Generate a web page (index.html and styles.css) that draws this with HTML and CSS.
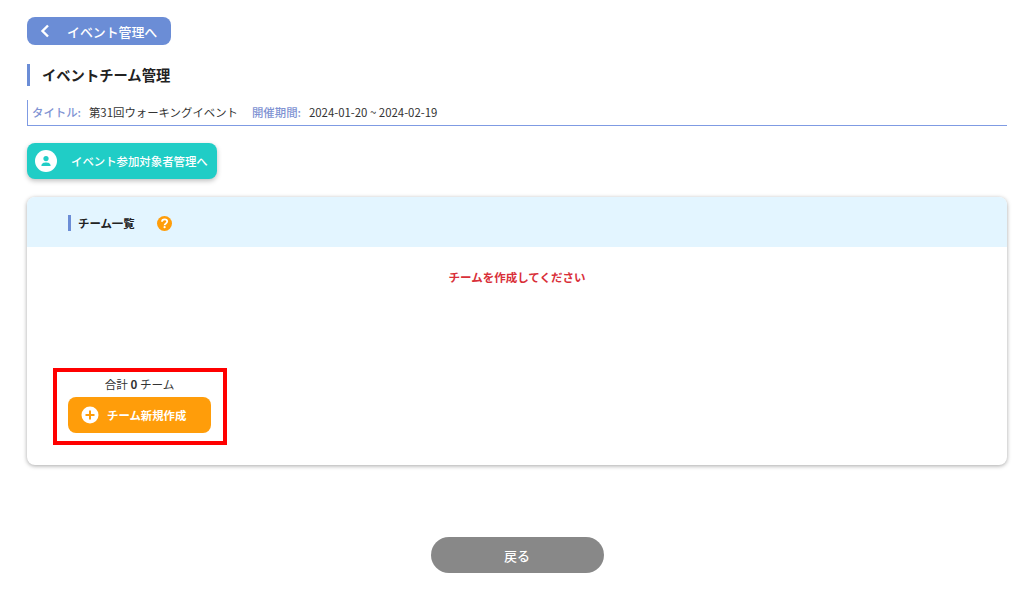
FILE: index.html
```html
<!DOCTYPE html>
<html lang="ja">
<head>
<meta charset="utf-8">
<title>イベントチーム管理</title>
<link rel="stylesheet" href="styles.css">
</head>
<body>
<main class="page">
  <a class="back-link">
    <svg class="back-icon" viewBox="0 0 10 14"><path d="M8 1.5 L2.5 7 L8 12.5" fill="none" stroke="#fff" stroke-width="2.4"/></svg>
    <span>イベント管理へ</span>
  </a>
  <h1 class="title">イベントチーム管理</h1>
  <div class="info">
    <span class="info-label">タイトル:</span><span class="info-value first">第31回ウォーキングイベント</span>
    <span class="info-label">開催期間:</span><span class="info-value">2024-01-20 ~ 2024-02-19</span>
  </div>
  <a class="member-link">
    <svg class="member-icon" viewBox="0 0 22 22"><circle cx="11" cy="11" r="11" fill="#fff"/><circle cx="11" cy="8.6" r="2.6" fill="#20cdc6"/><path d="M6.4 16 C6.4 13 8.6 12.4 11 12.4 C13.4 12.4 15.6 13 15.6 16 Z" fill="#20cdc6"/></svg>
    <span>イベント参加対象者管理へ</span>
  </a>
  <section class="card">
    <header class="card-head">
      <h2 class="card-title">チーム一覧</h2>
      <svg class="help-icon" viewBox="0 0 15 15"><circle cx="7.5" cy="7.5" r="7.5" fill="#ff9d0a"/><path d="M5 5.8 C5 4.2 6.2 3.4 7.6 3.4 C9 3.4 10.2 4.2 10.2 5.6 C10.2 7.4 7.6 7.4 7.6 9.2" fill="none" stroke="#fff" stroke-width="1.8"/><circle cx="7.6" cy="11.2" r="1.1" fill="#fff"/></svg>
    </header>
    <p class="notice">チームを作成してください</p>
    <div class="summary">
      <p class="total">合計 <b>0</b> チーム</p>
      <a class="create-btn">
        <svg class="plus-icon" viewBox="0 0 18 18"><circle cx="9" cy="9" r="8.5" fill="#fff"/><path d="M9 4.5 V13.5 M4.5 9 H13.5" stroke="#ff9d0a" stroke-width="2"/></svg>
        <span>チーム新規作成</span>
      </a>
    </div>
  </section>
  <div class="footer"><a class="return-btn">戻る</a></div>
</main>
</body>
</html>
```
FILE: styles.css
```css
* { box-sizing: border-box; }
html, body { margin: 0; height: 100%; overflow: hidden; background: #fff; }
body { font-family: "Noto Sans CJK JP", "Noto Sans", sans-serif; color: #222; }
p, h1, h2 { margin: 0; }
.page { padding: 17px 17px 0 27px; }
.back-link {
  display: flex; align-items: center; width: 144px; height: 28px;
  padding-left: 13px; background: #6b8dd6; border-radius: 8px;
  color: #fff; font-size: 12.9px; font-weight: 500;
}
.back-icon { width: 10px; height: 14px; margin-right: 17px; }
.title {
  margin-top: 19px; height: 22px; padding-left: 12px;
  border-left: 3px solid #6b8dd6;
  font-size: 14.3px; font-weight: 700; line-height: 22px;
}
.info {
  display: flex; align-items: center; height: 26px; margin-top: 14px;
  padding: 0 0 2px 4px; border-left: 1px solid #7f9be3; border-bottom: 1px solid #7f9be3;
  font-size: 11.4px;
}
.info-label { color: #7f93d3; font-weight: 500; margin-right: 8px; }
.info-value { color: #333; }
.info-value.first { margin-right: 14px; }
.member-link {
  display: flex; align-items: center; width: 190px; height: 36px; margin-top: 17px;
  padding-left: 8px; background: #20cdc6; border-radius: 8px;
  box-shadow: 0 2px 5px rgba(0,0,0,.25);
  color: #fff; font-size: 11.4px; font-weight: 500;
}
.member-icon { width: 22px; height: 22px; margin-right: 14px; }
.card {
  height: 268px; margin-top: 18px; background: #fff; border-radius: 8px;
  box-shadow: 0 1px 4px rgba(0,0,0,.35); overflow: hidden;
}
.card-head {
  display: flex; align-items: center; height: 50px; padding: 2px 0 0 41px;
  background: #e3f5ff;
}
.card-title {
  height: 16px; padding-left: 7px; border-left: 3px solid #6b8dd6;
  font-size: 11.4px; font-weight: 700; line-height: 16px;
}
.help-icon { width: 15px; height: 15px; margin-left: 22px; }
.notice {
  margin-top: 21px; text-align: center; color: #d9303a;
  font-size: 11.5px; font-weight: 700; line-height: 18px;
}
.summary {
  width: 174px; height: 77px; margin: 82px 0 0 26px; padding: 3px 0 0 11px;
  border: 4px solid #f00;
}
.total { width: 143px; text-align: center; font-size: 11.6px; line-height: 18px; color: #333; }
.total b { font-weight: 700; }
.create-btn {
  display: flex; align-items: center; width: 143px; height: 36px; margin-top: 4px;
  padding-left: 13px; background: #ff9d0a; border-radius: 8px;
  color: #fff; font-size: 11.4px; font-weight: 700;
}
.plus-icon { width: 18px; height: 18px; margin-right: 8px; }
.footer { display: flex; justify-content: center; margin-top: 72px; }
.return-btn {
  display: flex; align-items: center; justify-content: center;
  width: 173px; height: 36px; background: #888; border-radius: 18px;
  color: #fff; font-size: 13px; font-weight: 500;
}
```
